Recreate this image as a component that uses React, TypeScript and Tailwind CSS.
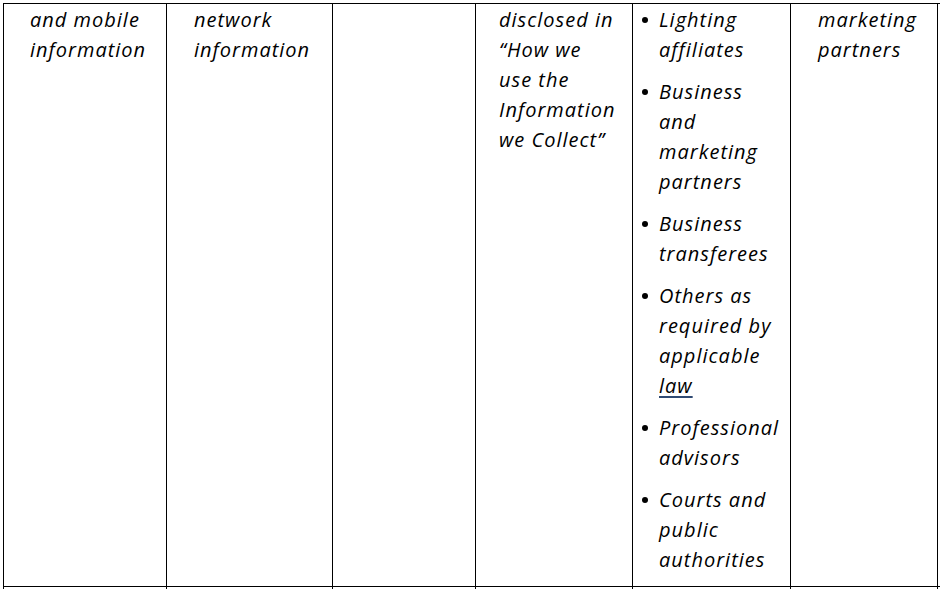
import React from "react";

const font = { fontFamily: '"Open Sans", "Noto Sans", sans-serif' };

function Lines({ lines }: { lines: React.ReactNode[] }) {
  return (
    <div>
      {lines.map((l, i) => (
        <div key={i} className="whitespace-nowrap">
          {l}
        </div>
      ))}
    </div>
  );
}

function Item({ lines }: { lines: React.ReactNode[] }) {
  return (
    <li className="flex">
      <span className="w-[26px] shrink-0 flex justify-start pl-[9px] pt-[12px]">
        <span className="block w-[6px] h-[6px] rounded-full bg-black" />
      </span>
      <Lines lines={lines} />
    </li>
  );
}

export default function App() {
  return (
    <div
      className="w-[940px] h-[589px] bg-white overflow-hidden text-black italic text-[20px] leading-[30px] tracking-[1px]"
      style={font}
    >
      <div className="pt-[3px] pl-[3px]">
        <div className="flex border-t border-b border-black h-[584px]">
          <div className="w-[163px] border-l border-black pl-[26px] pt-[1px]">
            <Lines lines={["and mobile", "information"]} />
          </div>
          <div className="w-[166px] border-l border-black pl-[27px] pt-[1px]">
            <Lines lines={["network", "information"]} />
          </div>
          <div className="w-[143px] border-l border-black" />
          <div className="w-[157px] border-l border-black pl-[23px] pt-[1px]">
            <Lines
              lines={[
                "disclosed in",
                "\u201cHow we",
                "use the",
                "Information",
                "we Collect\u201d",
              ]}
            />
          </div>
          <div className="w-[158px] border-l border-black pt-[1px]">
            <ul className="flex flex-col gap-[12px]">
              <Item lines={["Lighting", "affiliates"]} />
              <Item lines={["Business", "and", "marketing", "partners"]} />
              <Item lines={["Business", "transferees"]} />
              <Item
                lines={[
                  "Others as",
                  "required by",
                  "applicable",
                  <span className="underline decoration-[#2f4a73] underline-offset-[3px]">
                    law
                  </span>,
                ]}
              />
              <Item lines={["Professional", "advisors"]} />
              <Item lines={["Courts and", "public", "authorities"]} />
            </ul>
          </div>
          <div className="w-[148px] border-l border-r border-black pl-[27px] pt-[1px]">
            <Lines lines={["marketing", "partners"]} />
          </div>
        </div>
        <div className="flex h-[10px]">
          <div className="w-[163px] border-l border-black" />
          <div className="w-[166px] border-l border-black" />
          <div className="w-[143px] border-l border-black" />
          <div className="w-[157px] border-l border-black" />
          <div className="w-[158px] border-l border-black" />
          <div className="w-[148px] border-l border-r border-black" />
        </div>
      </div>
    </div>
  );
}
